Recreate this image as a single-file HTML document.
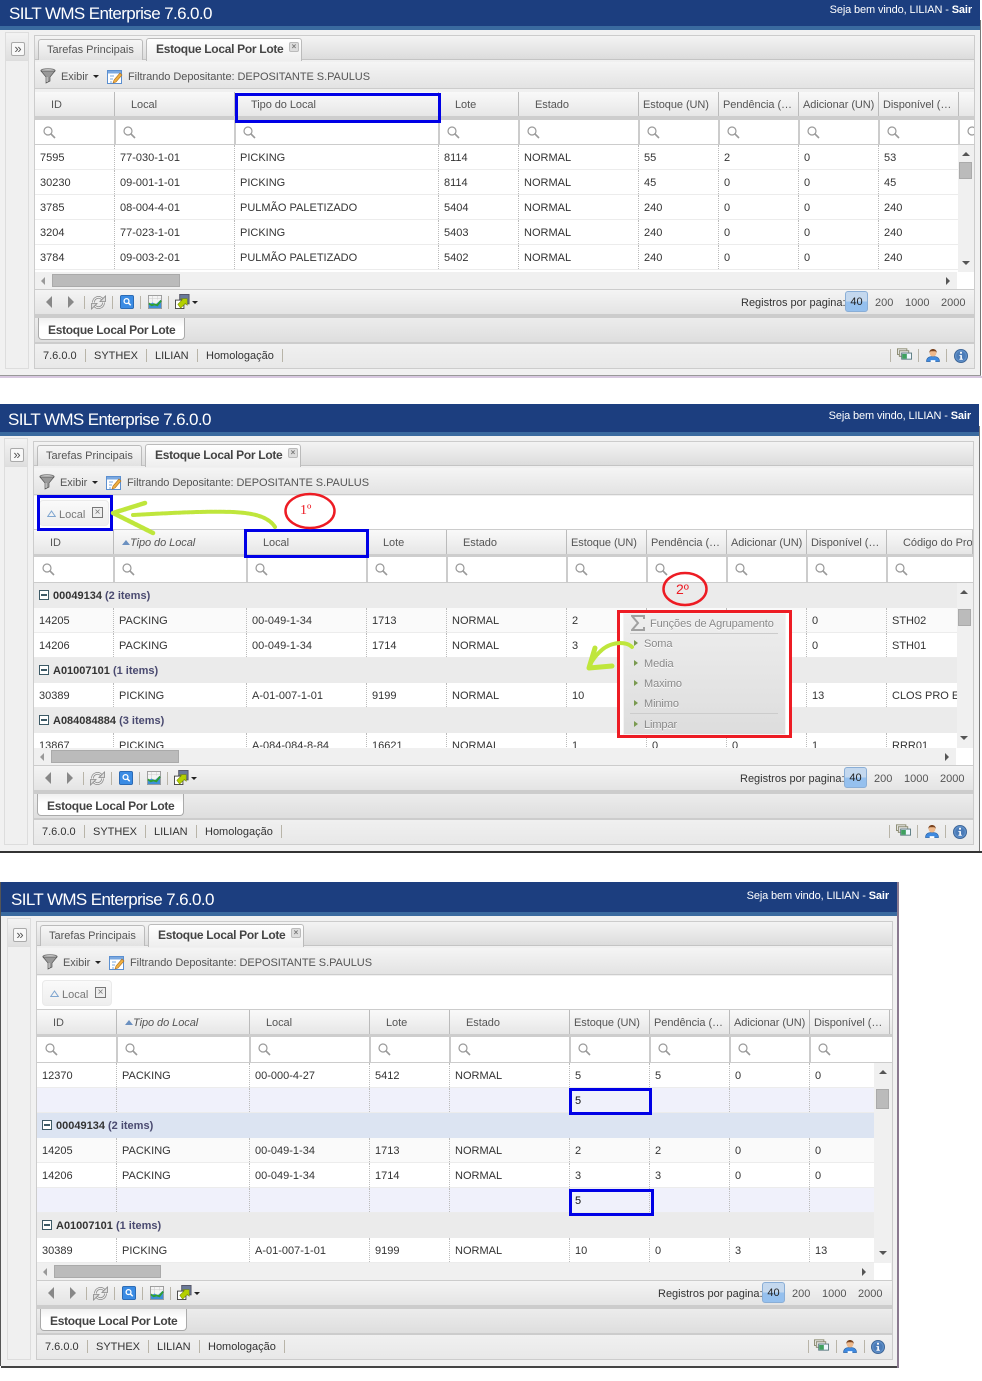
<!DOCTYPE html>
<html lang="pt">
<head>
<meta charset="utf-8">
<title>SILT WMS Enterprise</title>
<style>
html,body{margin:0;padding:0;background:#fff}
#page{position:relative;width:982px;height:1381px;overflow:hidden;background:#fff;font:11px/14px "Liberation Sans",sans-serif;color:#333}
.p{position:absolute}
.p div,.p span,.p svg,.an{position:absolute;box-sizing:border-box}
.t{white-space:nowrap;line-height:14px;margin-top:1px}
.body{left:-1px;top:20px;background:#f1f1f1;border-right:1px solid #777}
.hd{left:-1px;background:#1c3e7f;border-bottom:4px solid #3a6a9f}
.ttl{left:9px;top:4px;font-size:17px;line-height:20px;color:#fff;letter-spacing:-.62px;white-space:nowrap}
.wel{color:#fff;white-space:nowrap;line-height:14px;text-align:right;letter-spacing:-.13px}
.side{left:5px;top:32px;width:24px;background:#f0f0f0;border:1px solid #ddd}
.side0{left:5px;top:32px;width:24px;height:29px;background:linear-gradient(#f3f3f3,#dfdfdf);border:1px solid #ddd}
.sbtn{left:11px;top:42px;width:14px;height:14px;background:#f8f8f8;border:1px solid #aaa;border-radius:2px;font-size:13px;line-height:11px;text-align:center;color:#555}
.main{left:34px;top:35px;background:#f0f0f0;border:1px solid #ccc}
.tabs{left:35px;top:36px;height:24px;background:linear-gradient(#f4f4f4,#dcdcdc);border-bottom:1px solid #c4c4c4}
.tab1{left:38px;top:39px;width:105px;height:21px;background:linear-gradient(#f7f7f7,#e2e2e2);border:1px solid #bbb;border-bottom:0;border-radius:3px 3px 0 0;color:#555;padding:3px 0 0 8px;white-space:nowrap}
.tab2{left:146px;top:38px;width:156px;height:23px;background:linear-gradient(#fff,#eee);border:1px solid #bbb;border-bottom:0;border-radius:3px 3px 0 0;font-weight:bold;font-size:12px;letter-spacing:-.3px;color:#444;padding:3px 0 0 9px;white-space:nowrap}
.cl{left:142px;top:3px;width:10px;height:10px;background:#ddd;border:1px solid #bbb;border-radius:2px;font:bold 8px/8px "Liberation Sans",sans-serif;text-align:center;color:#777;letter-spacing:0}
.tb{left:35px;top:62px;height:27px;background:linear-gradient(#f5f5f5,#e3e3e3);border-bottom:1px solid #ccc}
.tt{color:#555;white-space:nowrap;margin-top:1px;letter-spacing:-.05px}
.car{width:0;height:0;border-left:3px solid transparent;border-right:3px solid transparent;border-top:3px solid #222}
.grp{left:35px;top:90px;height:34px;background:#fff;border-bottom:1px solid #ccc}
.chip{left:40px;top:94px;width:70px;height:26px;background:linear-gradient(#fafafa,#eee);border:1px solid #eaeaea;border-radius:4px}
.chip .t{left:19px;top:6px;color:#777}
.chip .tri{left:7px;top:9px}
.chip .x{left:52px;top:6px;width:11px;height:11px;border:1px solid #777;font:10px/9px "Liberation Sans",sans-serif;text-align:center;color:#777;background:#eee}
.g{display:grid}
.c1{grid-template-columns:80px 120px 204px 80px 120px 80px 80px 80px 80px 16px}
.c2{grid-template-columns:80px 133px 120px 80px 120px 80px 80px 80px 80px 86px}
.hr{left:35px;height:24px;background:linear-gradient(#f9f9f9,#f2f2f2 40%,#e6e6e6);overflow:hidden}
.hr b{font-weight:normal;color:#555;line-height:26px;height:24px;border-right:1px solid #bbb;padding-left:16px;white-space:nowrap;overflow:hidden;display:block;box-sizing:border-box;letter-spacing:-.06px}
.hr b.n{padding-left:4px}
.hr b.s{font-style:italic;padding-left:8px}
.hr em{display:inline-block;width:0;height:0;border-left:4px solid transparent;border-right:4px solid transparent;border-bottom:5px solid #6b90c0;margin-right:0;vertical-align:1px}
.bnd{left:35px;height:4px;background:#cdcdcd}
.fr{left:35px;background:#fff;border-bottom:1px solid #ccc;overflow:hidden}
.fr b{display:block;position:relative;height:100%;border-left:2px solid #ccc;margin-left:-1px;box-sizing:border-box}
.fr b:first-child{border-left:0;margin-left:0}
.fr svg{left:7px;top:6px;width:13px;height:13px}
.fr b:first-child svg{left:8px}
.rows{left:35px;overflow:hidden;background:#fff}
.r{position:relative!important;display:grid;height:25px;border-bottom:1px solid #ececec;background:#fff}
.r i{font-style:normal;line-height:26px;height:24px;padding-left:5px;border-right:1px dotted #bbb;white-space:nowrap;overflow:hidden;color:#333;box-sizing:border-box}
.r i:last-child{border-right:0}
.r.a{background:#fafafa}
.r.sum{background:#f0f1fb}
.gh{position:relative!important;height:25px;background:#ebebeb;font-weight:bold;line-height:26px;padding-left:19px;color:#333;white-space:nowrap}
.gh.bl{background:#dce4f2}
.gh u{text-decoration:none;color:#4a4a70}
.gh span{left:5px;top:7px;width:10px;height:10px;border:1px solid #3d5a66;background:#fff}
.gh span:after{content:"";position:absolute;left:1px;top:3px;width:6px;height:2px;background:#3d5a66}
.vs{background:#f0f0f0}
.th{background:#bbb;border:1px solid #aaa}
.up{width:0;height:0;border-left:4px solid transparent;border-right:4px solid transparent;border-bottom:4px solid #555}
.dn{width:0;height:0;border-left:4px solid transparent;border-right:4px solid transparent;border-top:4px solid #555}
.lf{width:0;height:0;border-top:4px solid transparent;border-bottom:4px solid transparent;border-right:4px solid #999}
.rt{width:0;height:0;border-top:4px solid transparent;border-bottom:4px solid transparent;border-left:4px solid #555}
.hs{left:35px;top:272px;height:17px;background:#f0f0f0}
.pg{left:35px;top:289px;height:26px;background:linear-gradient(#f4f4f4,#e4e4e4);border-top:1px solid #ccc;border-bottom:1px solid #ccc}
.sp{width:1px;height:13px;background:#b8b4a8}
.bd{left:35px;top:315px;height:3px;background:#ccc}
.bt{left:35px;top:318px;height:24px;background:linear-gradient(#ececec,#dedede)}
.btab{left:38px;top:318px;width:147px;height:22px;background:linear-gradient(#f0f0f0,#fff 45%);border:1px solid #aaa;border-top:0;border-radius:0 0 4px 4px;font-weight:bold;font-size:12px;letter-spacing:-.3px;color:#444;padding:5px 0 0 9px;white-space:nowrap}
.bd2{left:35px;top:342px;height:2px;background:#ccc}
.st{left:35px;top:344px;height:24px;background:linear-gradient(#f0f0f0,#e8e8e8)}
.btn40{left:104px;top:2px;width:23px;height:21px;background:linear-gradient(#c4d8ee 50%,#95c0ee 50%);border:1px solid #8aaed6;border-radius:3px;text-align:center;line-height:21px;color:#222}
.an{position:absolute;box-sizing:border-box}
.bb{border:3px solid #0000e6}
.mn{color:#8a8a8a;white-space:nowrap;text-shadow:0 1px 0 #fff;line-height:14px;margin-top:1px;letter-spacing:-.1px}
.mtr{width:0;height:0;border-top:3px solid transparent;border-bottom:3px solid transparent;border-left:4px solid #7a9a50}
</style>
</head>
<body>
<div id="page">
<svg width="0" height="0" style="position:absolute">
<defs>
<symbol id="q" viewBox="0 0 13 13"><circle cx="5" cy="5" r="4" fill="none" stroke="#999" stroke-width="1.2"/><path d="M8 8l4 4" stroke="#999" stroke-width="1.6"/></symbol>
<symbol id="fn" viewBox="0 0 16 16"><ellipse cx="8" cy="2.5" rx="7" ry="1.8" fill="#ddd" stroke="#777"/><path d="M1 3l5 6v6l4-2V9l5-6z" fill="#999" stroke="#555" stroke-width=".7"/><path d="M7 9v5" stroke="#ddd"/></symbol>
<symbol id="fm" viewBox="0 0 16 16"><rect x=".5" y="1.5" width="14" height="13" fill="#fff" stroke="#5b8fd0"/><rect x="1" y="2" width="13" height="2.5" fill="#7aa8e0"/><path d="M3 7h4M3 10h3M3 13h2" stroke="#7aa8e0"/><path d="M6 14l1-3 6-7 2 2-6 7z" fill="#f0b040" stroke="#b07020" stroke-width=".6"/></symbol>
<symbol id="rf" viewBox="0 0 15 15"><path d="M2.500 7.500A5 5 0 0 1 11 3.800" fill="none" stroke="#888" stroke-width="2.600"/><path d="M2.500 7.500A5 5 0 0 1 11 3.800" fill="none" stroke="#eee" stroke-width="1.100"/><path d="M9 6.500h5.500V1z" fill="#ddd" stroke="#888" stroke-width=".8"/><path d="M12.500 7.500A5 5 0 0 1 4 11.200" fill="none" stroke="#888" stroke-width="2.600"/><path d="M12.500 7.500A5 5 0 0 1 4 11.200" fill="none" stroke="#eee" stroke-width="1.100"/><path d="M6 8.500H.5V14z" fill="#ddd" stroke="#888" stroke-width=".8"/></symbol>
<symbol id="sb" viewBox="0 0 15 15"><rect x=".5" y=".5" width="14" height="14" rx="1.500" fill="#3b8ce4" stroke="#2a68b0"/><circle cx="7" cy="6.500" r="2.600" fill="none" stroke="#fff" stroke-width="1.400"/><path d="M9 8.500l2.500 2.500" stroke="#fff" stroke-width="1.600"/></symbol>
<symbol id="ch" viewBox="0 0 15 15"><rect x=".5" y=".5" width="14" height="14" fill="#f4f4f4" stroke="#999"/><path d="M1 10l4-2 3 2 6-5v9H1z" fill="#3f8fd8"/><path d="M1 9l3 2 3-1 3 1 4-5" fill="none" stroke="#2ea030" stroke-width="2"/><path d="M5 1v7M10 1v4M1 4h13" stroke="#ccc" stroke-width=".6"/></symbol>
<symbol id="ex" viewBox="0 0 16 16"><rect x="5" y=".5" width="10" height="10" fill="#6a7a9a" stroke="#556"/><rect x=".5" y="6.500" width="9" height="9" fill="#fff" stroke="#444"/><path d="M3 11l5-5-2-1h7v7l-2-2-5 5z" fill="#b4d000" stroke="#7a9000" stroke-width=".6"/></symbol>
<symbol id="wn" viewBox="0 0 16 12"><rect x=".5" y=".5" width="10" height="6" fill="#eee" stroke="#8a8a70"/><rect x="2.500" y="2.500" width="10" height="6" fill="#ddd" stroke="#8a8a70"/><rect x="5" y="5" width="10.500" height="6.500" fill="#f0f8ff" stroke="#5a7a80"/><rect x="5.500" y="6" width="5" height="5" fill="#3fa060"/></symbol>
<symbol id="us" viewBox="0 0 15 15"><path d="M.5 14c0-4 3-5.500 7-5.500s7 1.500 7 5.500z" fill="#3f8ae0" stroke="#2a60a0" stroke-width=".6"/><circle cx="7.500" cy="5" r="3.600" fill="#eeb98c"/><path d="M3.600 4.500C3.600 1.500 5.500.5 7.500.5s4 1 4 4L10 3H5z" fill="#7a4420"/><rect x="5" y="12.500" width="5" height="2" fill="#fff"/></symbol>
<symbol id="in" viewBox="0 0 15 15"><circle cx="7.500" cy="7.500" r="7" fill="#5f8fc8" stroke="#3c6496"/><circle cx="7.500" cy="7.500" r="5" fill="#4c7cb8"/><rect x="6.500" y="3" width="2" height="2" fill="#fff"/><path d="M5.800 6.500h2.700v4h1v1H5.800v-1h1v-3h-1z" fill="#fff"/></symbol>
</defs>
</svg>

<!-- PANEL 1 -->
<div class="p" style="left:0;top:0;--w:940px">
<div class="body" style="width:982px;height:356px"></div>
<div class="an" style="left:0;top:375px;width:981px;height:1px;background:#999"></div>
<div class="an" style="left:0;top:376px;width:982px;height:2px;background:#d8c8e0"></div>
<div class="hd" style="top:-6px;width:981px;height:36px"></div>
<div class="ttl">SILT WMS Enterprise 7.6.0.0</div>
<div class="wel" style="right:-972px;top:3px;font-size:11px">Seja bem vindo, LILIAN - <b>Sair</b></div>
<div class="side" style="height:337px"></div><div class="side0"></div><div class="sbtn">»</div>
<div class="main" style="width:941px;height:334px"></div>
<div class="tabs" style="width:939px"></div>
<div class="tab1">Tarefas Principais</div>
<div class="tab2">Estoque Local Por Lote<div class="cl">×</div></div>
<div class="tb" style="width:939px"></div>
<svg style="left:40px;top:68px" width="16" height="16"><use href="#fn"/></svg>
<div class="tt" style="left:61px;top:69px">Exibir</div><div class="car" style="left:93px;top:75px"></div>
<svg style="left:107px;top:69px" width="16" height="16"><use href="#fm"/></svg>
<div class="tt" style="left:128px;top:69px">Filtrando Depositante: DEPOSITANTE S.PAULUS</div>
<div class="hr g c1" style="top:92px;width:939px"><b>ID</b><b>Local</b><b>Tipo do Local</b><b>Lote</b><b>Estado</b><b class="n">Estoque (UN)</b><b class="n">Pendência (…</b><b class="n">Adicionar (UN)</b><b class="n">Disponível (…</b><b></b></div>
<div class="bnd" style="top:116px;width:939px"></div>
<div class="fr g c1" style="top:120px;width:939px;height:25px"><b><svg><use href="#q"/></svg></b><b><svg><use href="#q"/></svg></b><b><svg><use href="#q"/></svg></b><b><svg><use href="#q"/></svg></b><b><svg><use href="#q"/></svg></b><b><svg><use href="#q"/></svg></b><b><svg><use href="#q"/></svg></b><b><svg><use href="#q"/></svg></b><b><svg><use href="#q"/></svg></b><b><svg><use href="#q"/></svg></b></div>
<div class="rows" style="top:145px;width:923px;height:127px">
<div class="r c1"><i>7595</i><i>77-030-1-01</i><i>PICKING</i><i>8114</i><i>NORMAL</i><i>55</i><i>2</i><i>0</i><i>53</i></div>
<div class="r c1"><i>30230</i><i>09-001-1-01</i><i>PICKING</i><i>8114</i><i>NORMAL</i><i>45</i><i>0</i><i>0</i><i>45</i></div>
<div class="r c1"><i>3785</i><i>08-004-4-01</i><i>PULMÃO PALETIZADO</i><i>5404</i><i>NORMAL</i><i>240</i><i>0</i><i>0</i><i>240</i></div>
<div class="r c1"><i>3204</i><i>77-023-1-01</i><i>PICKING</i><i>5403</i><i>NORMAL</i><i>240</i><i>0</i><i>0</i><i>240</i></div>
<div class="r c1"><i>3784</i><i>09-003-2-01</i><i>PULMÃO PALETIZADO</i><i>5402</i><i>NORMAL</i><i>240</i><i>0</i><i>0</i><i>240</i></div>
</div>
<div class="vs" style="left:958px;top:145px;width:16px;height:127px"></div>
<div class="up" style="left:962px;top:152px"></div>
<div class="th" style="left:959px;top:162px;width:13px;height:17px"></div>
<div class="dn" style="left:962px;top:261px"></div>
<div class="hs" style="width:922px"></div>
<div class="lf" style="left:41px;top:277px"></div>
<div class="th" style="left:52px;top:274px;width:128px;height:13px"></div>
<div class="rt" style="left:946px;top:277px"></div>
<div class="an" style="left:957px;top:272px;width:17px;height:17px;background:#fff"></div>
<div class="pg" style="width:939px"></div>
<div class="an" style="left:46px;top:296px;width:0;height:0;border-top:6px solid transparent;border-bottom:6px solid transparent;border-right:6px solid #888"></div>
<div class="an" style="left:68px;top:296px;width:0;height:0;border-top:6px solid transparent;border-bottom:6px solid transparent;border-left:6px solid #888"></div>
<div class="sp" style="left:84px;top:296px"></div>
<svg style="left:91px;top:295px" width="15" height="15"><use href="#rf"/></svg>
<div class="sp" style="left:112px;top:296px"></div>
<svg style="left:120px;top:295px" width="14" height="14"><use href="#sb"/></svg>
<div class="sp" style="left:140px;top:296px"></div>
<svg style="left:148px;top:295px" width="14" height="14"><use href="#ch"/></svg>
<div class="sp" style="left:168px;top:296px"></div>
<svg style="left:175px;top:294px" width="15" height="15"><use href="#ex"/></svg>
<div class="car" style="left:192px;top:301px"></div>
<div style="left:741px;top:289px;width:233px;height:26px">
<div class="t" style="left:0;top:6px">Registros por pagina:</div><div class="btn40">40</div><div class="t" style="left:134px;top:6px;color:#555">200</div><div class="t" style="left:164px;top:6px;color:#555">1000</div><div class="t" style="left:200px;top:6px;color:#555">2000</div></div>
<div class="bd" style="width:939px"></div>
<div class="bt" style="width:939px"></div>
<div class="btab">Estoque Local Por Lote</div>
<div class="bd2" style="width:939px"></div>
<div class="st" style="width:939px"></div>
<div class="t" style="left:43px;top:348px">7.6.0.0</div><div class="sp" style="left:85px;top:349px"></div>
<div class="t" style="left:94px;top:348px">SYTHEX</div><div class="sp" style="left:146px;top:349px"></div>
<div class="t" style="left:155px;top:348px">LILIAN</div><div class="sp" style="left:197px;top:349px"></div>
<div class="t" style="left:206px;top:348px">Homologação</div><div class="sp" style="left:282px;top:349px"></div>
<div class="sp" style="left:890px;top:349px"></div><svg style="left:897px;top:348px" width="15" height="12"><use href="#wn"/></svg>
<div class="sp" style="left:918px;top:349px"></div><svg style="left:926px;top:348px" width="14" height="15"><use href="#us"/></svg>
<div class="sp" style="left:946px;top:349px"></div><svg style="left:954px;top:349px" width="14" height="14"><use href="#in"/></svg>
</div>

<!-- PANEL 2 -->
<div class="p" style="left:-1px;top:406px;--w:940px">
<div class="body" style="width:982px;height:425px"></div>
<div class="an" style="left:0;top:445px;width:983px;height:2px;background:#333"></div>
<div class="hd" style="top:-2px;width:981px;height:32px"></div>
<div class="ttl">SILT WMS Enterprise 7.6.0.0</div>
<div class="wel" style="right:-972px;top:3px;font-size:11px">Seja bem vindo, LILIAN - <b>Sair</b></div>
<div class="side" style="height:407px"></div><div class="side0"></div><div class="sbtn">»</div>
<div class="main" style="width:941px;height:404px"></div>
<div class="tabs" style="width:939px"></div>
<div class="tab1">Tarefas Principais</div>
<div class="tab2">Estoque Local Por Lote<div class="cl">×</div></div>
<div class="tb" style="width:939px"></div>
<svg style="left:40px;top:68px" width="16" height="16"><use href="#fn"/></svg>
<div class="tt" style="left:61px;top:69px">Exibir</div><div class="car" style="left:93px;top:75px"></div>
<svg style="left:107px;top:69px" width="16" height="16"><use href="#fm"/></svg>
<div class="tt" style="left:128px;top:69px">Filtrando Depositante: DEPOSITANTE S.PAULUS</div>
<div class="grp" style="width:939px"></div>
<div class="chip"><svg class="tri" width="9" height="7" viewBox="0 0 9 7"><path d="M.7 6.500L4.500 1l3.800 5.500z" fill="none" stroke="#7fa6d0"/></svg><div class="t">Local</div><div class="x">×</div></div>
<div class="hr g c2" style="top:124px;width:939px"><b>ID</b><b class="s"><em></em>Tipo do Local</b><b>Local</b><b>Lote</b><b>Estado</b><b class="n">Estoque (UN)</b><b class="n">Pendência (…</b><b class="n">Adicionar (UN)</b><b class="n">Disponível (…</b><b>Código do Produto</b></div>
<div class="bnd" style="top:148px;width:939px"></div>
<div class="fr g c2" style="top:151px;width:939px;height:26px"><b><svg><use href="#q"/></svg></b><b><svg><use href="#q"/></svg></b><b><svg><use href="#q"/></svg></b><b><svg><use href="#q"/></svg></b><b><svg><use href="#q"/></svg></b><b><svg><use href="#q"/></svg></b><b><svg><use href="#q"/></svg></b><b><svg><use href="#q"/></svg></b><b><svg><use href="#q"/></svg></b><b><svg><use href="#q"/></svg></b></div>
<div class="rows" style="top:177px;width:923px;height:165px">
<div class="gh"><span></span>00049134 <u>(2 items)</u></div>
<div class="r c2 a"><i>14205</i><i>PACKING</i><i>00-049-1-34</i><i>1713</i><i>NORMAL</i><i>2</i><i>2</i><i>0</i><i>0</i><i>STH02</i></div>
<div class="r c2"><i>14206</i><i>PACKING</i><i>00-049-1-34</i><i>1714</i><i>NORMAL</i><i>3</i><i>3</i><i>0</i><i>0</i><i>STH01</i></div>
<div class="gh"><span></span>A01007101 <u>(1 items)</u></div>
<div class="r c2"><i>30389</i><i>PICKING</i><i>A-01-007-1-01</i><i>9199</i><i>NORMAL</i><i>10</i><i>0</i><i>3</i><i>13</i><i>CLOS PRO E</i></div>
<div class="gh"><span></span>A084084884 <u>(3 items)</u></div>
<div class="r c2"><i>13867</i><i>PICKING</i><i>A-084-084-8-84</i><i>16621</i><i>NORMAL</i><i>1</i><i>0</i><i>0</i><i>1</i><i>RRR01</i></div>
</div>
<div class="vs" style="left:958px;top:177px;width:16px;height:165px"></div>
<div class="up" style="left:961px;top:184px"></div>
<div class="th" style="left:959px;top:203px;width:13px;height:17px"></div>
<div class="dn" style="left:961px;top:330px"></div>
<div style="left:0;top:70px;width:982px;height:300px">
<div class="hs" style="width:922px"></div>
<div class="lf" style="left:41px;top:277px"></div>
<div class="th" style="left:52px;top:274px;width:128px;height:13px"></div>
<div class="rt" style="left:946px;top:277px"></div>
<div class="an" style="left:957px;top:272px;width:17px;height:17px;background:#fff"></div>
<div class="pg" style="width:939px"></div>
<div class="an" style="left:46px;top:296px;width:0;height:0;border-top:6px solid transparent;border-bottom:6px solid transparent;border-right:6px solid #888"></div>
<div class="an" style="left:68px;top:296px;width:0;height:0;border-top:6px solid transparent;border-bottom:6px solid transparent;border-left:6px solid #888"></div>
<div class="sp" style="left:84px;top:296px"></div>
<svg style="left:91px;top:295px" width="15" height="15"><use href="#rf"/></svg>
<div class="sp" style="left:112px;top:296px"></div>
<svg style="left:120px;top:295px" width="14" height="14"><use href="#sb"/></svg>
<div class="sp" style="left:140px;top:296px"></div>
<svg style="left:148px;top:295px" width="14" height="14"><use href="#ch"/></svg>
<div class="sp" style="left:168px;top:296px"></div>
<svg style="left:175px;top:294px" width="15" height="15"><use href="#ex"/></svg>
<div class="car" style="left:192px;top:301px"></div>
<div style="left:741px;top:289px;width:233px;height:26px">
<div class="t" style="left:0;top:6px">Registros por pagina:</div><div class="btn40">40</div><div class="t" style="left:134px;top:6px;color:#555">200</div><div class="t" style="left:164px;top:6px;color:#555">1000</div><div class="t" style="left:200px;top:6px;color:#555">2000</div></div>
<div class="bd" style="width:939px"></div>
<div class="bt" style="width:939px"></div>
<div class="btab">Estoque Local Por Lote</div>
<div class="bd2" style="width:939px"></div>
<div class="st" style="width:939px"></div>
<div class="t" style="left:43px;top:348px">7.6.0.0</div><div class="sp" style="left:85px;top:349px"></div>
<div class="t" style="left:94px;top:348px">SYTHEX</div><div class="sp" style="left:146px;top:349px"></div>
<div class="t" style="left:155px;top:348px">LILIAN</div><div class="sp" style="left:197px;top:349px"></div>
<div class="t" style="left:206px;top:348px">Homologação</div><div class="sp" style="left:282px;top:349px"></div>
<div class="sp" style="left:890px;top:349px"></div><svg style="left:897px;top:348px" width="15" height="12"><use href="#wn"/></svg>
<div class="sp" style="left:918px;top:349px"></div><svg style="left:926px;top:348px" width="14" height="15"><use href="#us"/></svg>
<div class="sp" style="left:946px;top:349px"></div><svg style="left:954px;top:349px" width="14" height="14"><use href="#in"/></svg>
</div>
</div>

<!-- PANEL 3 -->
<div class="p" style="left:2px;top:886px;--w:856px">
<div class="body" style="width:897px;height:460px"></div>
<div class="an" style="left:-1px;top:480px;width:897px;height:2px;background:#444"></div>
<div class="an" style="left:-2px;top:-4px;width:1px;height:484px;background:#555"></div>
<div class="an" style="left:895px;top:-4px;width:2px;height:486px;background:#8a7a90"></div>
<div class="hd" style="top:-4px;width:896px;height:34px"></div>
<div class="ttl">SILT WMS Enterprise 7.6.0.0</div>
<div class="wel" style="right:-887px;top:3px;font-size:11px">Seja bem vindo, LILIAN - <b>Sair</b></div>
<div class="side" style="height:442px"></div><div class="side0"></div><div class="sbtn">»</div>
<div class="main" style="width:857px;height:439px"></div>
<div class="tabs" style="width:855px"></div>
<div class="tab1">Tarefas Principais</div>
<div class="tab2">Estoque Local Por Lote<div class="cl">×</div></div>
<div class="tb" style="width:855px"></div>
<svg style="left:40px;top:68px" width="16" height="16"><use href="#fn"/></svg>
<div class="tt" style="left:61px;top:69px">Exibir</div><div class="car" style="left:93px;top:75px"></div>
<svg style="left:107px;top:69px" width="16" height="16"><use href="#fm"/></svg>
<div class="tt" style="left:128px;top:69px">Filtrando Depositante: DEPOSITANTE S.PAULUS</div>
<div class="grp" style="width:855px"></div>
<div class="chip"><svg class="tri" width="9" height="7" viewBox="0 0 9 7"><path d="M.7 6.500L4.500 1l3.800 5.500z" fill="none" stroke="#7fa6d0"/></svg><div class="t">Local</div><div class="x">×</div></div>
<div class="hr g c2" style="top:124px;width:855px"><b>ID</b><b class="s"><em></em>Tipo do Local</b><b>Local</b><b>Lote</b><b>Estado</b><b class="n">Estoque (UN)</b><b class="n">Pendência (…</b><b class="n">Adicionar (UN)</b><b class="n">Disponível (…</b></div>
<div class="bnd" style="top:148px;width:855px"></div>
<div class="fr g c2" style="top:151px;width:855px;height:26px"><b><svg><use href="#q"/></svg></b><b><svg><use href="#q"/></svg></b><b><svg><use href="#q"/></svg></b><b><svg><use href="#q"/></svg></b><b><svg><use href="#q"/></svg></b><b><svg><use href="#q"/></svg></b><b><svg><use href="#q"/></svg></b><b><svg><use href="#q"/></svg></b><b><svg><use href="#q"/></svg></b></div>
<div class="rows" style="top:177px;width:837px;height:200px">
<div class="r c2"><i>12370</i><i>PACKING</i><i>00-000-4-27</i><i>5412</i><i>NORMAL</i><i>5</i><i>5</i><i>0</i><i>0</i></div>
<div class="r c2 sum"><i></i><i></i><i></i><i></i><i></i><i></i><i></i><i></i><i></i></div>
<div class="gh bl"><span></span>00049134 <u>(2 items)</u></div>
<div class="r c2 a"><i>14205</i><i>PACKING</i><i>00-049-1-34</i><i>1713</i><i>NORMAL</i><i>2</i><i>2</i><i>0</i><i>0</i></div>
<div class="r c2"><i>14206</i><i>PACKING</i><i>00-049-1-34</i><i>1714</i><i>NORMAL</i><i>3</i><i>3</i><i>0</i><i>0</i></div>
<div class="r c2 sum"><i></i><i></i><i></i><i></i><i></i><i></i><i></i><i></i><i></i></div>
<div class="gh"><span></span>A01007101 <u>(1 items)</u></div>
<div class="r c2"><i>30389</i><i>PICKING</i><i>A-01-007-1-01</i><i>9199</i><i>NORMAL</i><i>10</i><i>0</i><i>3</i><i>13</i></div>
</div>
<div class="vs" style="left:872px;top:177px;width:17px;height:200px"></div>
<div class="up" style="left:877px;top:184px"></div>
<div class="th" style="left:874px;top:203px;width:13px;height:20px"></div>
<div class="dn" style="left:877px;top:365px"></div>
<div style="left:0;top:105px;width:897px;height:300px">
<div class="hs" style="width:837px"></div>
<div class="lf" style="left:41px;top:277px"></div>
<div class="th" style="left:52px;top:274px;width:107px;height:13px"></div>
<div class="rt" style="left:860px;top:277px"></div>
<div class="an" style="left:872px;top:272px;width:17px;height:17px;background:#fff"></div>
<div class="pg" style="width:855px"></div>
<div class="an" style="left:46px;top:296px;width:0;height:0;border-top:6px solid transparent;border-bottom:6px solid transparent;border-right:6px solid #888"></div>
<div class="an" style="left:68px;top:296px;width:0;height:0;border-top:6px solid transparent;border-bottom:6px solid transparent;border-left:6px solid #888"></div>
<div class="sp" style="left:84px;top:296px"></div>
<svg style="left:91px;top:295px" width="15" height="15"><use href="#rf"/></svg>
<div class="sp" style="left:112px;top:296px"></div>
<svg style="left:120px;top:295px" width="14" height="14"><use href="#sb"/></svg>
<div class="sp" style="left:140px;top:296px"></div>
<svg style="left:148px;top:295px" width="14" height="14"><use href="#ch"/></svg>
<div class="sp" style="left:168px;top:296px"></div>
<svg style="left:175px;top:294px" width="15" height="15"><use href="#ex"/></svg>
<div class="car" style="left:192px;top:301px"></div>
<div style="left:656px;top:289px;width:233px;height:26px">
<div class="t" style="left:0;top:6px">Registros por pagina:</div><div class="btn40">40</div><div class="t" style="left:134px;top:6px;color:#555">200</div><div class="t" style="left:164px;top:6px;color:#555">1000</div><div class="t" style="left:200px;top:6px;color:#555">2000</div></div>
<div class="bd" style="width:855px"></div>
<div class="bt" style="width:855px"></div>
<div class="btab">Estoque Local Por Lote</div>
<div class="bd2" style="width:855px"></div>
<div class="st" style="width:855px"></div>
<div class="t" style="left:43px;top:348px">7.6.0.0</div><div class="sp" style="left:85px;top:349px"></div>
<div class="t" style="left:94px;top:348px">SYTHEX</div><div class="sp" style="left:146px;top:349px"></div>
<div class="t" style="left:155px;top:348px">LILIAN</div><div class="sp" style="left:197px;top:349px"></div>
<div class="t" style="left:206px;top:348px">Homologação</div><div class="sp" style="left:282px;top:349px"></div>
<div class="sp" style="left:806px;top:349px"></div><svg style="left:812px;top:348px" width="15" height="12"><use href="#wn"/></svg>
<div class="sp" style="left:834px;top:349px"></div><svg style="left:841px;top:348px" width="14" height="15"><use href="#us"/></svg>
<div class="sp" style="left:862px;top:349px"></div><svg style="left:869px;top:349px" width="14" height="14"><use href="#in"/></svg>
</div>
</div>

<!-- ANNOTATIONS -->
<div class="an bb" style="left:235px;top:93px;width:206px;height:30px"></div>
<div class="an bb" style="left:37px;top:495px;width:76px;height:36px"></div>
<div class="an bb" style="left:244px;top:529px;width:125px;height:29px"></div>
<div class="an bb" style="left:569px;top:1088px;width:83px;height:27px"></div>
<div class="an bb" style="left:569px;top:1189px;width:85px;height:27px"></div>
<div class="an t" style="left:575px;top:1093px;color:#111">5</div>
<div class="an t" style="left:575px;top:1193px;color:#111">5</div>

<div class="an" style="left:617px;top:610px;width:175px;height:128px;background:#fff;border:3px solid #ed1c24"></div>
<div class="an" style="left:623px;top:613px;width:163px;height:122px;background:linear-gradient(#eee,#ddd);border:1px solid #f4f4f4"></div>
<svg class="an" style="left:631px;top:615px" width="14" height="16" viewBox="0 0 14 16"><path d="M13 4V1H1l6 7-6 7h12v-3" fill="none" stroke="#a0a0a0" stroke-width="2"/></svg>
<div class="an mn" style="left:650px;top:616px">Funções de Agrupamento</div>
<div class="an" style="left:630px;top:633px;width:148px;height:1px;background:#ccc"></div>
<div class="an mtr" style="left:634px;top:640px"></div><div class="an mn" style="left:644px;top:636px">Soma</div>
<div class="an mtr" style="left:634px;top:660px"></div><div class="an mn" style="left:644px;top:656px">Media</div>
<div class="an mtr" style="left:634px;top:680px"></div><div class="an mn" style="left:644px;top:676px">Maximo</div>
<div class="an mtr" style="left:634px;top:700px"></div><div class="an mn" style="left:644px;top:696px">Minimo</div>
<div class="an" style="left:630px;top:713px;width:148px;height:1px;background:#ccc"></div>
<div class="an mtr" style="left:634px;top:721px"></div><div class="an mn" style="left:644px;top:717px">Limpar</div>

<svg class="an" style="left:0;top:480px" width="982" height="220" viewBox="0 480 982 220">
<ellipse cx="310" cy="511" rx="24.500" ry="17" fill="none" stroke="#ed1c24" stroke-width="2.500"/>
<ellipse cx="685" cy="589" rx="21.500" ry="16" fill="none" stroke="#ed1c24" stroke-width="2.500"/>
<g fill="none" stroke="#bfe63c" stroke-linecap="round">
<path d="M133 515C170 513 205 511 233 512C252 513 268 516 275 527" stroke-width="4" stroke-dasharray="3 1.500"/>
<path d="M113 513L145 503M113 513L153 533" stroke-width="4.500" stroke-dasharray="3 1"/>
<path d="M632 647C626 641 612 642 603 649C597 654 592 660 589 667" stroke-width="4" stroke-dasharray="3 1"/>
<path d="M589 668L595 648M589 668L612 666" stroke-width="5"/>
</g>
</svg>
<div class="an" style="left:300px;top:503px;font:14px/16px 'Liberation Serif',serif;color:#ed1c24;white-space:nowrap">1º</div>
<div class="an" style="left:676px;top:581px;font:14px/16px 'Liberation Sans',sans-serif;color:#ed1c24;white-space:nowrap">2º</div>
</div>
</body>
</html>
